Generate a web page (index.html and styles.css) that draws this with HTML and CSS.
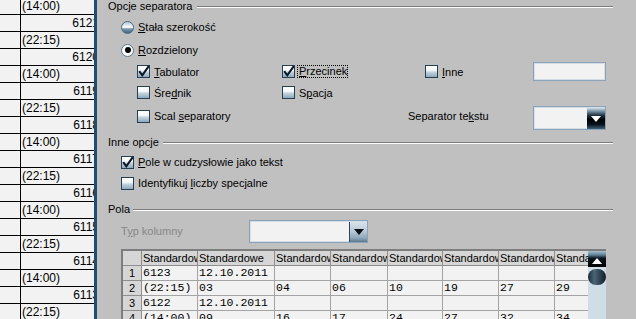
FILE: index.html
```html
<!DOCTYPE html>
<html lang="pl">
<head>
<meta charset="utf-8">
<title>Import tekstu</title>
<link rel="stylesheet" href="styles.css">
</head>
<body>
<div class="sheet">
  <div class="sheet-rows">
    <div class="srow"><div class="a"></div><div class="b">(14:00)</div></div>
    <div class="srow"><div class="a"></div><div class="b num">6121</div></div>
    <div class="srow"><div class="a"></div><div class="b">(22:15)</div></div>
    <div class="srow"><div class="a"></div><div class="b num">6120</div></div>
    <div class="srow"><div class="a"></div><div class="b">(14:00)</div></div>
    <div class="srow"><div class="a"></div><div class="b num">6119</div></div>
    <div class="srow"><div class="a"></div><div class="b">(22:15)</div></div>
    <div class="srow"><div class="a"></div><div class="b num">6118</div></div>
    <div class="srow"><div class="a"></div><div class="b">(14:00)</div></div>
    <div class="srow"><div class="a"></div><div class="b num">6117</div></div>
    <div class="srow"><div class="a"></div><div class="b">(22:15)</div></div>
    <div class="srow"><div class="a"></div><div class="b num">6116</div></div>
    <div class="srow"><div class="a"></div><div class="b">(14:00)</div></div>
    <div class="srow"><div class="a"></div><div class="b num">6115</div></div>
    <div class="srow"><div class="a"></div><div class="b">(22:15)</div></div>
    <div class="srow"><div class="a"></div><div class="b num">6114</div></div>
    <div class="srow"><div class="a"></div><div class="b">(14:00)</div></div>
    <div class="srow"><div class="a"></div><div class="b num">6113</div></div>
    <div class="srow"><div class="a"></div><div class="b">(22:15)</div></div>
  </div>
</div>
<div class="frame"></div>
<div class="dialog">
  <div class="hdr hdr-1"><span>Opcje separatora</span><span class="rule"></span></div>

  <div class="radio-row r1"><span class="radio"></span><span><u>S</u>tała szerokość</span></div>
  <div class="radio-row r2"><span class="radio on"><span class="dot"></span></span><span><u>R</u>ozdzielony</span></div>

  <div class="opts-row row-a">
    <div class="cell c1"><span class="chk"><span class="box"><svg viewBox="0 0 13 13" width="13" height="13"><path d="M2.2 6.2 L5.3 10.3 L11.8 1.2" fill="none" stroke="#0b1826" stroke-width="2.1"/></svg></span><span><u>T</u>abulator</span></span></div>
    <div class="cell c2"><span class="chk"><span class="box"><svg viewBox="0 0 13 13" width="13" height="13"><path d="M2.2 6.2 L5.3 10.3 L11.8 1.2" fill="none" stroke="#0b1826" stroke-width="2.1"/></svg></span><span class="focus"><u>P</u>rzecinek</span></span></div>
    <div class="cell c3"><span class="chk"><span class="box"></span><span><u>I</u>nne</span></span></div>
    <div class="edit"></div>
  </div>

  <div class="opts-row row-b">
    <div class="cell c1"><span class="chk"><span class="box"></span><span>Śre<u>d</u>nik</span></span></div>
    <div class="cell c2"><span class="chk"><span class="box"></span><span>S<u>p</u>acja</span></span></div>
  </div>

  <div class="opts-row row-c">
    <div class="cell c-scal"><span class="chk"><span class="box"></span><span>Scal <u>s</u>eparatory</span></span></div>
    <div class="cell c-sep"><span>Separator te<u>k</u>stu</span></div>
    <div class="combo combo-sep"><span class="btn btn-dark"><svg viewBox="0 0 10 6" width="10" height="6"><path d="M0 0 H10 L5 6 Z" fill="#fff"/></svg></span></div>
  </div>

  <div class="hdr hdr-2"><span>Inne opcje</span><span class="rule"></span></div>
  <div class="cb-row cb-1"><span class="chk"><span class="box"><svg viewBox="0 0 13 13" width="13" height="13"><path d="M2.2 6.2 L5.3 10.3 L11.8 1.2" fill="none" stroke="#0b1826" stroke-width="2.1"/></svg></span><span><u>P</u>ole w cudzysłowie jako tekst</span></span></div>
  <div class="cb-row cb-2"><span class="chk"><span class="box"></span><span>Identyfikuj <u>l</u>iczby specjalne</span></span></div>

  <div class="hdr hdr-3"><span>Pola</span><span class="rule"></span></div>
  <div class="typ-row">
    <span class="typ-label">T<u>y</u>p kolumny</span>
    <div class="combo combo-typ"><span class="btn btn-light"><svg viewBox="0 0 10 6" width="10" height="6"><path d="M0 0 H10 L5 6 Z" fill="#0a1016"/></svg></span></div>
  </div>

  <div class="grid">
    <div class="table">
      <div class="th corner"></div>
      <div class="th"><span class="clip">Standardowe</span></div>
      <div class="th"><span class="clip">Standardowe</span></div>
      <div class="th"><span class="clip">Standardowe</span></div>
      <div class="th"><span class="clip">Standardowe</span></div>
      <div class="th"><span class="clip">Standardowe</span></div>
      <div class="th"><span class="clip">Standardowe</span></div>
      <div class="th"><span class="clip">Standardowe</span></div>
      <div class="th last"><span class="clip">Standardowe</span></div>

      <div class="rn">1</div>
      <div class="td">6123</div><div class="td">12.10.2011</div><div class="td"></div><div class="td"></div><div class="td"></div><div class="td"></div><div class="td"></div><div class="td last"></div>

      <div class="rn">2</div>
      <div class="td">(22:15)</div><div class="td">03</div><div class="td">04</div><div class="td">06</div><div class="td">10</div><div class="td">19</div><div class="td">27</div><div class="td last">29</div>

      <div class="rn">3</div>
      <div class="td">6122</div><div class="td">12.10.2011</div><div class="td"></div><div class="td"></div><div class="td"></div><div class="td"></div><div class="td"></div><div class="td last"></div>

      <div class="rn">4</div>
      <div class="td">(14:00)</div><div class="td">09</div><div class="td">16</div><div class="td">17</div><div class="td">24</div><div class="td">27</div><div class="td">32</div><div class="td last">34</div>
    </div>
    <div class="sb">
      <div class="sb-btn"><svg viewBox="0 0 10 6" width="10" height="6"><path d="M0 6 H10 L5 0 Z" fill="#fff"/></svg></div>
      <div class="sb-thumb"></div>
    </div>
  </div>
</div>
</body>
</html>
```
FILE: styles.css
```css
* { box-sizing: border-box; }
html, body { margin: 0; padding: 0; }
body {
  width: 636px;
  height: 319px;
  overflow: hidden;
  display: flex;
  font-family: "Liberation Sans", Arial, sans-serif;
  font-size: 11px;
  color: #000;
  background: #c0c0c0;
}
u { text-decoration: underline; text-underline-offset: 1px; }

/* left spreadsheet */
.sheet {
  width: 94px;
  flex: none;
  overflow: hidden;
  background: #f2f2f2;
  font-size: 12px;
}
.sheet-rows { width: 101px; margin-top: -2px; }
.srow { display: flex; height: 17px; border-bottom: 1px solid #000; }
.srow .a { width: 21px; flex: none; border-right: 1px solid #000; }
.srow .b {
  flex: 1;
  padding: 0 2px 0 1px;
  line-height: 16px;
  white-space: nowrap;
  overflow: hidden;
}
.srow .b.num { text-align: right; }

.frame { width: 3px; flex: none; background: #1f4c70; }

/* dialog */
.dialog {
  flex: 1;
  min-width: 0;
  height: 319px;
  background: #c0c0c0;
  display: flex;
  flex-direction: column;
  overflow: hidden;
}
.dialog > * { flex-shrink: 0; }
.hdr {
  display: flex;
  height: 13px;
  line-height: 13px;
  padding-left: 11px;
  margin-right: 23px;
  white-space: nowrap;
}
.hdr .rule {
  flex: 1;
  height: 2px;
  margin: 6px 0 0 4px;
  border-top: 1px solid #7c7c7c;
  border-bottom: 1px solid #fff;
}
.hdr-1 { margin-top: 0; }
.hdr-1 .rule { margin-left: 5px; }
.hdr-2 { margin-top: 6px; }
.hdr-3 { margin-top: 13px; }
.hdr-3 .rule { margin-left: 3px; }

.radio-row {
  display: flex;
  align-items: center;
  gap: 4px;
  height: 14px;
  padding-left: 24px;
}
.r1 { margin-top: 7px; }
.r2 { margin-top: 9px; }
.radio {
  width: 13px;
  height: 13px;
  border-radius: 50%;
  border: 1px solid #4d6b82;
  background: linear-gradient(#b3c4d1 0%, #e9eff3 35%, #ffffff 48%, #7d9bb2 62%, #3b6182 100%);
  display: flex;
  align-items: center;
  justify-content: center;
}
.radio.on { background: #fafbfc; border-color: #5d7a90; }
.radio .dot { width: 6px; height: 6px; border-radius: 50%; background: #000; }

.opts-row { display: flex; align-items: center; padding-left: 40px; }
.row-a { margin-top: 5px; height: 19px; }
.row-b { margin-top: 4px; height: 15px; }
.row-c { margin-top: 6px; height: 24px; }
.row-c .cell { margin-bottom: 4px; }
.cell { display: flex; align-items: center; flex: none; white-space: nowrap; }
.c1 { width: 145px; }
.c2 { width: 143px; }
.c3 { width: 108px; }
.c-scal { width: 271px; }
.c-sep { width: 125px; }

.chk { display: flex; align-items: center; gap: 4px; white-space: nowrap; }
.box {
  width: 13px;
  height: 13px;
  flex: none;
  border: 1px solid #263f52;
  background: linear-gradient(#ffffff 0%, #f4f7f9 40%, #c5d4df 55%, #8ea9bd 100%);
  position: relative;
  overflow: visible;
}
.box svg { position: absolute; left: -1px; top: -1px; }
.focus {
  border: 1px dotted #000;
  line-height: 11px;
  margin-left: -2px;
  padding: 0 0 0 1px;
}

.edit {
  width: 73px;
  height: 19px;
  flex: none;
  border: 1px solid #8aa3b8;
  box-shadow: inset 0 0 0 1px #d4dde5;
  background: #f2f2f2;
}

.combo {
  display: flex;
  justify-content: flex-end;
  flex: none;
  border: 1px solid #8aa3b8;
  box-shadow: inset 0 0 0 1px #d4dde5;
  background: #f2f2f2;
  padding: 1px 0 0 0;
}
.combo-sep { width: 73px; height: 24px; }
.combo-typ { width: 119px; height: 23px; }
.btn {
  width: 18px;
  display: flex;
  align-items: center;
  justify-content: center;
}
.btn-dark {
  background: linear-gradient(#d2dde4 0%, #8aa2b3 12%, #203341 35%, #000 55%, #06121a 78%, #3f6075 100%);
}
.btn-light {
  background: linear-gradient(#d8e3ea 0%, #b9cbd8 45%, #8ea8bb 80%, #5a788e 100%);
  border-left: 1px solid #2f4656;
}

.cb-row {
  display: flex;
  align-items: center;
  height: 14px;
  padding-left: 24px;
}
.cb-1 { margin-top: 6px; }
.cb-2 { margin-top: 7px; }

.typ-row {
  display: flex;
  align-items: center;
  margin-top: 4px;
  padding-left: 24px;
  height: 23px;
}
.typ-label { width: 128px; color: #878787; white-space: nowrap; margin-top: -1px; }

/* preview grid */
.grid {
  margin-top: 6px;
  margin-left: 24px;
  width: 485px;
  flex: 1 1 auto;
  min-height: 0;
  overflow: hidden;
  display: flex;
  border-top: 2px solid #7d7d7d;
  border-left: 2px solid #7d7d7d;
  background: #f2f2f2;
}
.table {
  width: 465px;
  flex: none;
  display: grid;
  grid-template-columns: 19px 56px 77px 56px 57px 55px 56px 56px 33px;
  grid-auto-rows: 15px;
  align-content: start;
}
.th, .td, .rn {
  overflow: hidden;
  white-space: nowrap;
  border-right: 1px solid #a4a4a4;
  border-bottom: 1px solid #a4a4a4;
  line-height: 14px;
  padding-left: 1px;
}
.th { background: #d6d6d6; border-color: #8e8e8e; }
.clip { display: block; overflow: hidden; }
.rn { background: #d6d6d6; border-color: #8e8e8e; text-align: center; padding-left: 0; }
.td {
  background: #f2f2f2;
  font-family: "Liberation Mono", "Courier New", monospace;
  font-size: 11.5px;
}
.last { border-right: none; }

.sb {
  width: 18px;
  flex: none;
  background: #cfdde6;
  display: flex;
  flex-direction: column;
}
.sb-btn {
  height: 16px;
  background: linear-gradient(#a7bfcf 0%, #5e7f95 25%, #0a141a 45%, #000 100%);
  display: flex;
  align-items: center;
  justify-content: center;
  padding-top: 3px;
}
.sb-thumb {
  margin-top: 2px;
  height: 16px;
  border-radius: 8px;
  background: linear-gradient(90deg, #1b2a35 0%, #4d6576 35%, #2e4453 65%, #111c24 100%);
}
```
